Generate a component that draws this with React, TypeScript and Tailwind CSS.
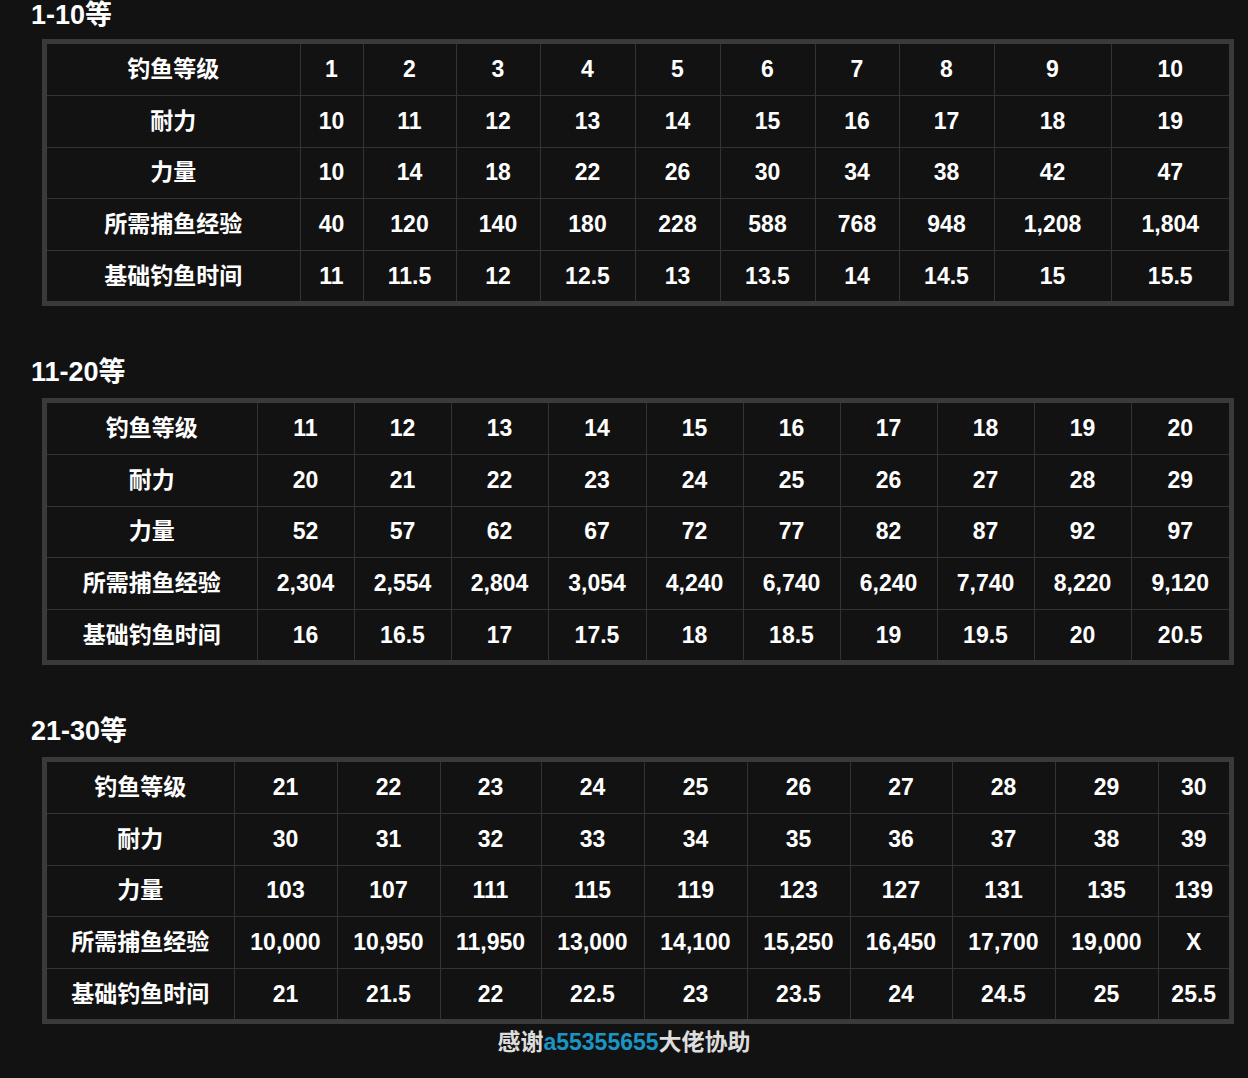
const font = { fontFamily: '"Liberation Sans", Arial, "Noto Sans CJK SC", sans-serif' }

interface Tier {
  title: string
  widths: number[]
  rows: string[][]
}

const labels = ['钓鱼等级', '耐力', '力量', '所需捕鱼经验', '基础钓鱼时间']
// row heights per table row
const rowH = ['h-[51px]', 'h-[52px]', 'h-[51px]', 'h-[52px]', 'h-[51px]']

const tiers: Tier[] = [
  {
    title: '1-10等',
    widths: [253, 63, 93, 84, 95, 85, 95, 84, 95, 117, 118],
    rows: [
      ['1', '2', '3', '4', '5', '6', '7', '8', '9', '10'],
      ['10', '11', '12', '13', '14', '15', '16', '17', '18', '19'],
      ['10', '14', '18', '22', '26', '30', '34', '38', '42', '47'],
      ['40', '120', '140', '180', '228', '588', '768', '948', '1,208', '1,804'],
      ['11', '11.5', '12', '12.5', '13', '13.5', '14', '14.5', '15', '15.5'],
    ],
  },
  {
    title: '11-20等',
    widths: [210, 97, 97, 97, 98, 97, 97, 97, 97, 97, 98],
    rows: [
      ['11', '12', '13', '14', '15', '16', '17', '18', '19', '20'],
      ['20', '21', '22', '23', '24', '25', '26', '27', '28', '29'],
      ['52', '57', '62', '67', '72', '77', '82', '87', '92', '97'],
      ['2,304', '2,554', '2,804', '3,054', '4,240', '6,740', '6,240', '7,740', '8,220', '9,120'],
      ['16', '16.5', '17', '17.5', '18', '18.5', '19', '19.5', '20', '20.5'],
    ],
  },
  {
    title: '21-30等',
    widths: [187, 103, 103, 101, 103, 103, 103, 102, 103, 103, 71],
    rows: [
      ['21', '22', '23', '24', '25', '26', '27', '28', '29', '30'],
      ['30', '31', '32', '33', '34', '35', '36', '37', '38', '39'],
      ['103', '107', '111', '115', '119', '123', '127', '131', '135', '139'],
      ['10,000', '10,950', '11,950', '13,000', '14,100', '15,250', '16,450', '17,700', '19,000', 'X'],
      ['21', '21.5', '22', '22.5', '23', '23.5', '24', '24.5', '25', '25.5'],
    ],
  },
]

function TierTable({ tier, first }: { tier: Tier; first: boolean }) {
  return (
    <section>
      <h2
        className={`${first ? 'mt-0 mb-[9px]' : 'mt-[51px] mb-[11px]'} ml-[31px] h-[30px] leading-[30px] text-[27px] font-bold text-white`}
      >
        {tier.title}
      </h2>
      <div className="ml-[42px] mr-[14px] border-[5px] border-[#3a3a3a]">
        <table className="w-full table-fixed border-collapse">
          <colgroup>
            {tier.widths.map((w, i) => (
              <col key={i} style={{ width: w }} />
            ))}
          </colgroup>
          <tbody>
            {tier.rows.map((row, r) => (
              <tr key={r} className={rowH[r]}>
                {[labels[r], ...row].map((cell, c) => (
                  <td
                    key={c}
                    className={`border-[#333] p-0 text-center align-middle text-[23px] font-bold text-white
                      ${c > 0 ? 'border-l' : ''} ${r > 0 ? 'border-t' : ''}`}
                  >
                    {cell}
                  </td>
                ))}
              </tr>
            ))}
          </tbody>
        </table>
      </div>
    </section>
  )
}

export default function App() {
  return (
    <div className="min-h-[1078px] bg-[#121212]" style={font}>
      {tiers.map((t, i) => (
        <TierTable key={t.title} tier={t} first={i === 0} />
      ))}
      <p className="h-[36px] text-center leading-[36px] text-[23px] font-bold text-[#dddddd]">
        感谢<span className="text-[#1b95c4]">a55355655</span>大佬协助
      </p>
    </div>
  )
}
